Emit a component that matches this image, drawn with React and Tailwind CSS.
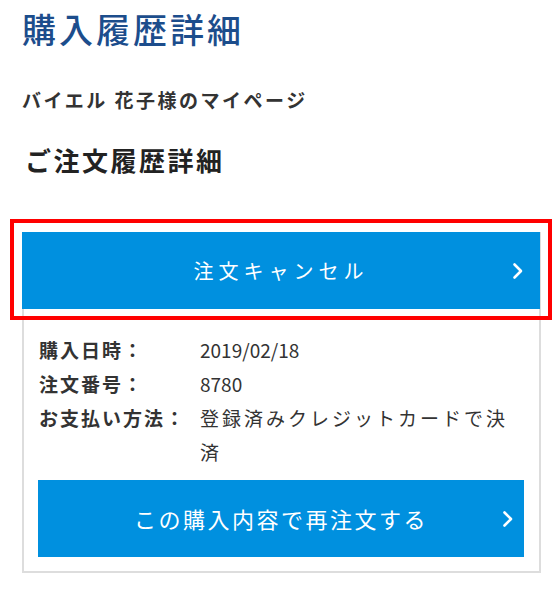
function Chevron({ className }) {
  return (
    <svg className={className} width="12" height="18" viewBox="0 0 12 18" fill="none">
      <polyline points="2.5,2.5 9,9 2.5,15.5" stroke="white" strokeWidth="2.6" strokeLinecap="round" strokeLinejoin="round" />
    </svg>
  );
}

function Row({ label, children }) {
  return (
    <div className="flex">
      <dt className="w-[161px] shrink-0 font-bold tracking-[2px]">{label}</dt>
      <dd className="flex-1">{children}</dd>
    </div>
  );
}

export default function App() {
  return (
    <div
      className="min-h-[589px] bg-white text-[#333]"
      style={{ fontFamily: '"Noto Sans CJK JP", "Noto Sans", sans-serif' }}
    >
      <div className="pt-[4px] pl-[22px]">
        <h1 className="text-[34px] leading-[50px] font-medium tracking-[3px] text-[#1c4d8c]">購入履歴詳細</h1>
        <p className="mt-[33px] text-[19px] leading-[26px] font-bold tracking-[2.5px] text-[#333]">バイエル 花子様のマイページ</p>
        <h2 className="mt-[29px] ml-[3px] text-[26px] leading-[36px] font-bold tracking-[2.5px] text-[#222]">ご注文履歴詳細</h2>
      </div>

      <div className="mt-[54px] ml-[22px] w-[519px] border-2 border-[#dddddd] pb-[14px]">
        <div className="relative -mx-[2px] -mt-[2px]">
          <button className="relative flex h-[77px] w-[518px] items-center justify-center bg-[#0090df] text-[20px] tracking-[5px] text-white">
            注文キャンセル
            <Chevron className="absolute right-[16px] top-1/2 -translate-y-1/2" />
          </button>
          <div className="pointer-events-none absolute -top-[13px] -left-[12px] -bottom-[11px] -right-[11px] border-4 border-[#ff0000]"></div>
        </div>

        <dl className="mt-[24px] pl-[15px] pr-[15px] text-[19px] leading-[34px] text-[#333]">
          <Row label="購入日時：">2019/02/18</Row>
          <Row label="注文番号：">8780</Row>
          <Row label="お支払い方法：">
            <span className="tracking-[3px]">登録済みクレジットカードで決済</span>
          </Row>
        </dl>

        <button className="relative mt-[11px] ml-[14px] flex h-[77px] w-[486px] items-center justify-center bg-[#0090df] text-[22px] tracking-[2.5px] text-white">
          この購入内容で再注文する
          <Chevron className="absolute right-[10px] top-1/2 -translate-y-1/2" />
        </button>
      </div>
    </div>
  );
}
